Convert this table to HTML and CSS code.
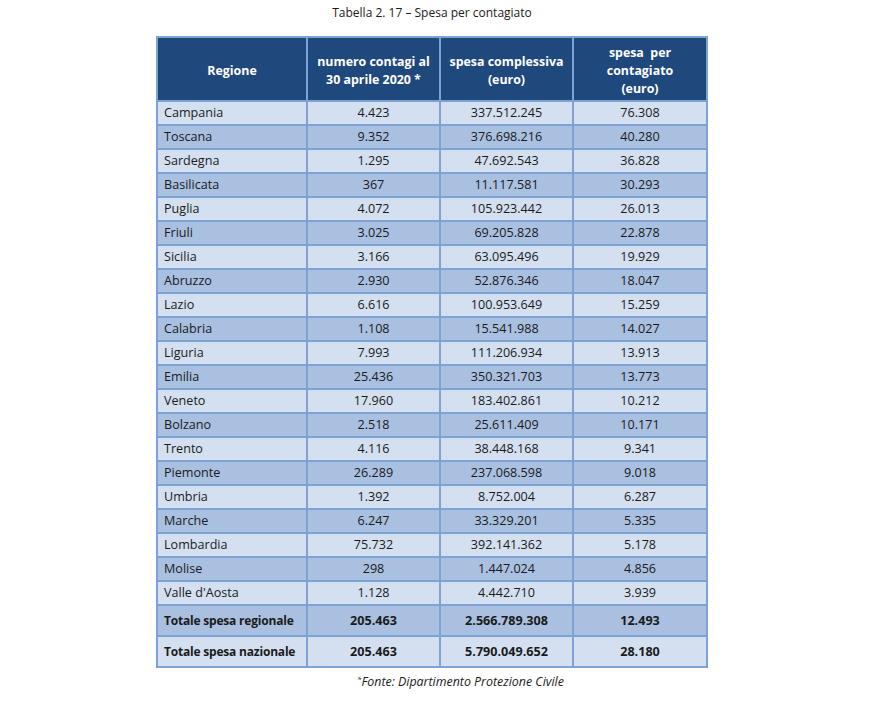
FILE: index.html
```html
<!DOCTYPE html>
<html lang="it">
<head>
<meta charset="utf-8">
<title>Tabella 2.17</title>
<link rel="stylesheet" href="styles.css">
</head>
<body>
<div class="wrap">
  <div class="title">Tabella 2. 17 – Spesa per contagiato</div>
  <table class="tab">
    <colgroup>
      <col class="c1"><col class="c2"><col class="c3"><col class="c4">
    </colgroup>
    <thead>
      <tr>
        <th>Regione</th>
        <th>numero contagi al<br>30 aprile 2020 *</th>
        <th>spesa complessiva<br>(euro)</th>
        <th>spesa&nbsp; per<br>contagiato<br>(euro)</th>
      </tr>
    </thead>
    <tbody>
      <tr class="l"><td>Campania</td><td>4.423</td><td>337.512.245</td><td>76.308</td></tr>
      <tr class="d"><td>Toscana</td><td>9.352</td><td>376.698.216</td><td>40.280</td></tr>
      <tr class="l"><td>Sardegna</td><td>1.295</td><td>47.692.543</td><td>36.828</td></tr>
      <tr class="d"><td>Basilicata</td><td>367</td><td>11.117.581</td><td>30.293</td></tr>
      <tr class="l"><td>Puglia</td><td>4.072</td><td>105.923.442</td><td>26.013</td></tr>
      <tr class="d"><td>Friuli</td><td>3.025</td><td>69.205.828</td><td>22.878</td></tr>
      <tr class="l"><td>Sicilia</td><td>3.166</td><td>63.095.496</td><td>19.929</td></tr>
      <tr class="d"><td>Abruzzo</td><td>2.930</td><td>52.876.346</td><td>18.047</td></tr>
      <tr class="l"><td>Lazio</td><td>6.616</td><td>100.953.649</td><td>15.259</td></tr>
      <tr class="d"><td>Calabria</td><td>1.108</td><td>15.541.988</td><td>14.027</td></tr>
      <tr class="l"><td>Liguria</td><td>7.993</td><td>111.206.934</td><td>13.913</td></tr>
      <tr class="d"><td>Emilia</td><td>25.436</td><td>350.321.703</td><td>13.773</td></tr>
      <tr class="l"><td>Veneto</td><td>17.960</td><td>183.402.861</td><td>10.212</td></tr>
      <tr class="d"><td>Bolzano</td><td>2.518</td><td>25.611.409</td><td>10.171</td></tr>
      <tr class="l"><td>Trento</td><td>4.116</td><td>38.448.168</td><td>9.341</td></tr>
      <tr class="d"><td>Piemonte</td><td>26.289</td><td>237.068.598</td><td>9.018</td></tr>
      <tr class="l"><td>Umbria</td><td>1.392</td><td>8.752.004</td><td>6.287</td></tr>
      <tr class="d"><td>Marche</td><td>6.247</td><td>33.329.201</td><td>5.335</td></tr>
      <tr class="l"><td>Lombardia</td><td>75.732</td><td>392.141.362</td><td>5.178</td></tr>
      <tr class="d"><td>Molise</td><td>298</td><td>1.447.024</td><td>4.856</td></tr>
      <tr class="l"><td>Valle d'Aosta</td><td>1.128</td><td>4.442.710</td><td>3.939</td></tr>
      <tr class="d tot"><td>Totale spesa regionale</td><td>205.463</td><td>2.566.789.308</td><td>12.493</td></tr>
      <tr class="l tot"><td>Totale spesa nazionale</td><td>205.463</td><td>5.790.049.652</td><td>28.180</td></tr>
    </tbody>
  </table>
  <div class="note"><sup>*</sup>Fonte: Dipartimento Protezione Civile</div>
</div>
</body>
</html>
```
FILE: styles.css
```css
html, body {
  margin: 0;
  padding: 0;
  background: #ffffff;
}
body {
  font-family: "Open Sans", "Noto Sans", sans-serif;
  color: #1b1b1b;
}
.wrap {
  width: 552px;
  padding-left: 156px;
}
.title {
  font-size: 12px;
  line-height: 16px;
  text-align: center;
  padding-top: 5px;
  height: 36px;
  box-sizing: border-box;
  color: #1b1b1b;
}
.tab {
  width: 550px;
  border-collapse: collapse;
  table-layout: fixed;
  border: 2px solid #7fa2d4;
  font-size: 12.6px;
}
.c1 { width: 150px; }
.c2 { width: 133px; }
.c3 { width: 133px; }
.c4 { width: 134px; }
.tab th, .tab td {
  border: 2px solid #7fa2d4;
  padding: 0;
  white-space: nowrap;
}
.tab th {
  background: #1f497d;
  color: #ffffff;
  font-weight: 700;
  font-size: 12.4px;
  line-height: 18px;
  height: 62px;
  box-sizing: border-box;
  padding: 6px 4px 2px;
  text-align: center;
}
.tab td {
  line-height: 22px;
  height: 22px;
  text-align: center;
}
.tab td:first-child {
  text-align: left;
  padding-left: 6px;
}
.tab tr.l td { background: #d4e0f0; }
.tab tr.d td { background: #a9c0e0; }
.tab tr.tot td {
  font-weight: 700;
  line-height: 29px;
  height: 29px;
}
.tab tr.tot td:first-child {
  font-size: 12px;
  letter-spacing: -0.2px;
}
.note {
  font-size: 12.4px;
  font-style: italic;
  line-height: 16px;
  margin-top: 6px;
  padding-left: 201px;
}
.note sup {
  font-size: 8px;
  line-height: 0;
  vertical-align: 4px;
}
```
